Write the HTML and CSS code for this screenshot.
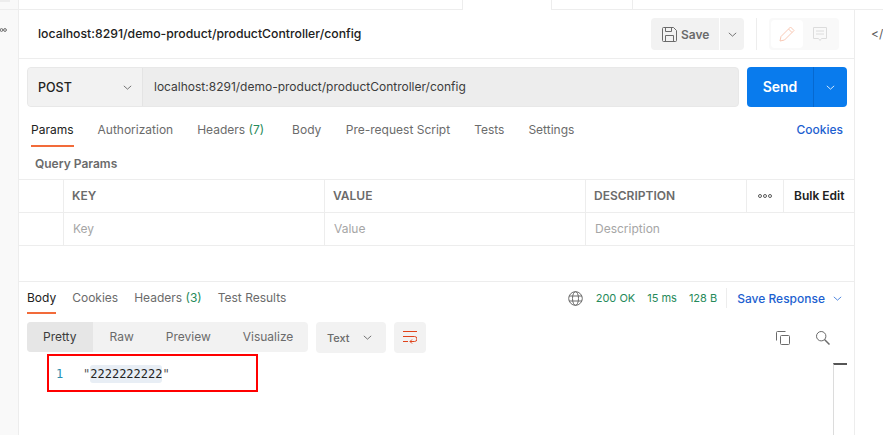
FILE: index.html
```html
<!DOCTYPE html>
<html lang="en">
<head>
<meta charset="utf-8">
<title>Postman request</title>
<link rel="stylesheet" href="styles.css">
</head>
<body>
<div class="app">
  <aside class="sidebar"><span class="side-top"></span><span class="side-rule"></span><svg class="side-dots" width="7" height="4" viewBox="0 0 7 4" fill="none" stroke="#6b6b6b"><circle cx="1.500" cy="2" r="1.400"/><circle cx="5" cy="2" r="1.400"/></svg></aside>
  <main class="main">
    <div class="tabstrip"><span class="tab-a"></span><span class="tab-b"></span></div>
    <header class="titlebar">
      <div class="title">localhost:8291/demo-product/productController/config</div>
      <div class="save-group">
        <button class="save"><svg width="15" height="15" viewBox="0 0 15 15" fill="none" stroke="#6b6b6b"><path d="M.5 1.500a1 1 0 0 1 1-1h10l3 3v10a1 1 0 0 1-1 1h-12a1 1 0 0 1-1-1z"/><path d="M3.500.5v4h6v-4M3.500 14.500v-6h8v6"/></svg>Save</button>
        <button class="save-more"><svg class="chev" width="9" height="5" viewBox="0 0 11 6"><path d="M1 1l4.500 4L10 1"/></svg></button>
      </div>
      <span class="vsep"></span>
      <div class="mode">
        <span class="mode-on"><svg width="16" height="16" viewBox="0 0 16 16" fill="none" stroke="#f9c9b5"><path d="M1 15l1-4.500L11.500 1l3.500 3.500L5.500 14z"/><path d="M9.500 3l3.500 3.500"/></svg></span>
        <span class="mode-off"><svg width="14" height="14" viewBox="0 0 14 14" fill="none" stroke="#dcdcdc"><path d="M.5.5h13v11h-5l-1.500 2-1.500-2h-5z"/><path d="M3 4h8M3 7h8"/></svg></span>
      </div>
    </header>
    <section class="urlrow">
      <div class="urlbox">
        <div class="method"><span>POST</span><svg class="chev" width="9" height="5" viewBox="0 0 11 6"><path d="M1 1l4.500 4L10 1"/></svg></div>
        <div class="url">localhost:8291/demo-product/productController/config</div>
      </div>
      <div class="send"><span class="send-label">Send</span><span class="send-more"><svg class="chev white" width="9" height="5" viewBox="0 0 11 6"><path d="M1 1l4.500 4L10 1"/></svg></span></div>
    </section>
    <nav class="reqtabs">
      <span class="rt active">Params</span>
      <span class="rt">Authorization</span>
      <span class="rt">Headers <i class="count">(7)</i></span>
      <span class="rt body-tab">Body</span>
      <span class="rt">Pre-request Script</span>
      <span class="rt">Tests</span>
      <span class="rt">Settings</span>
      <span class="cookies">Cookies</span>
    </nav>
    <div class="qp">Query Params</div>
    <div class="row head">
      <span class="c0"></span><span class="c1">KEY</span><span class="c2">VALUE</span><span class="c3">DESCRIPTION</span><span class="c4"><svg width="14" height="4" viewBox="0 0 14 4" fill="none" stroke="#5a5a5a"><circle cx="2" cy="2" r="1.500"/><circle cx="7" cy="2" r="1.500"/><circle cx="12" cy="2" r="1.500"/></svg></span><span class="c5">Bulk Edit</span>
    </div>
    <div class="row ph">
      <span class="c0"></span><span class="c1">Key</span><span class="c2">Value</span><span class="c3">Description</span>
    </div>
    <div class="spacer"></div>
    <nav class="restabs">
      <div class="restab-list">
        <span class="rs active">Body</span>
        <span class="rs">Cookies</span>
        <span class="rs">Headers <i class="count">(3)</i></span>
        <span class="rs">Test Results</span>
      </div>
      <div class="status">
        <svg class="globe" width="15" height="15" viewBox="0 0 15 15" fill="none" stroke="#6b6b6b"><circle cx="7.500" cy="7.500" r="6.800"/><ellipse cx="7.500" cy="7.500" rx="3" ry="6.800"/><path d="M1 5h13M1 10h13"/></svg>
        <span class="ok">200 OK</span><span class="ok">15 ms</span><span class="ok">128 B</span>
        <span class="stat-sep"></span>
        <span class="save-resp">Save Response</span>
        <svg class="chev blue" width="9" height="5" viewBox="0 0 11 6"><path d="M1 1l4.500 4L10 1"/></svg>
      </div>
    </nav>
    <div class="toolbar">
      <div class="views">
        <span class="view on">Pretty</span><span class="view raw">Raw</span><span class="view">Preview</span><span class="view">Visualize</span>
      </div>
      <div class="fmt"><span>Text</span><svg class="chev" width="9" height="5" viewBox="0 0 11 6"><path d="M1 1l4.500 4L10 1"/></svg></div>
      <div class="wrap"><svg width="14" height="14" viewBox="0 0 14 14" fill="none" stroke="#e0431b"><path d="M0 .5h14M0 5.500h11.500a2.500 2.500 0 0 1 0 5H7M0 10.500h5"/><path d="M9 8.500l-2 2 2 2"/></svg></div>
      <div class="tools">
        <svg width="14" height="14" viewBox="0 0 14 14" fill="none" stroke="#6b6b6b"><rect x="4.500" y="4.500" width="9" height="9" rx="1"/><path d="M.5 9.500v-8a1 1 0 0 1 1-1h8"/></svg>
        <svg width="14" height="14" viewBox="0 0 14 14" fill="none" stroke="#6b6b6b"><circle cx="5.200" cy="5.200" r="4.700"/><path d="M8.500 8.500l5 5" stroke-width="1.500"/></svg>
      </div>
    </div>
    <div class="editor">
      <div class="highlight-box">
        <span class="ln">1</span><span class="code"><span class="q">"</span><span class="sel">2222222222</span><span class="q">"</span></span>
      </div>
      <div class="scroll"></div>
    </div>
  </main>
  <aside class="rightbar"><span class="code-icon">&lt;/</span></aside>
</div>
</body>
</html>
```
FILE: styles.css
```css
* { box-sizing: border-box; }
html, body { margin: 0; height: 100%; overflow: hidden; background: #fff; }
body { font-family: Inter, "Liberation Sans", sans-serif; font-size: 12px; color: #6b6b6b; }
button { font: inherit; border: 0; color: inherit; padding: 0; }
i { font-style: normal; }

.app { display: flex; width: 883px; height: 435px; }
.sidebar { width: 19px; background: #f9f9f9; border-right: 1px solid #ededed; position: relative; }
.side-top { position: absolute; left: 0; top: 0; width: 10px; height: 2px; background: #ededed; }
.side-rule { position: absolute; left: 0; top: 9px; width: 18px; height: 1px; background: #ededed; }
.side-dots { position: absolute; left: 0; top: 28px; }
.main { width: 835px; display: flex; flex-direction: column; }
.rightbar { width: 29px; margin-top: 9px; border-top: 1px solid #ededed; border-left: 1px solid #ededed; padding-top: 14px; padding-left: 16px; }
.code-icon { font-size: 12px; line-height: 20px; white-space: nowrap; color: #5a5a5a; }

.tabstrip { height: 10px; border-bottom: 1px solid #ededed; display: flex; align-items: flex-start; padding-left: 443px; }
.tab-a { width: 90px; height: 10px; border-left: 1px solid #ededed; border-right: 1px solid #ededed; background: #fff; }
.tab-b { width: 81px; height: 9px; border-right: 1px solid #ededed; }

.titlebar { height: 49px; border-bottom: 1px solid #ededed; display: flex; align-items: center; padding-left: 19px; }
.title { width: 613px; padding-bottom: 2px; font-size: 12.250px; font-weight: 500; color: #212121; white-space: nowrap; }
.save-group { display: flex; gap: 1px; height: 32px; }
.save { width: 68px; height: 32px; background: #f2f2f2; border-radius: 4px 0 0 4px; display: flex; align-items: center; gap: 4px; padding-left: 11px; font-weight: 600; font-size: 12px; }
.save-more { width: 24px; height: 32px; background: #f2f2f2; border-radius: 0 4px 4px 0; display: flex; align-items: center; justify-content: center; }
.vsep { width: 1px; height: 32px; background: #ededed; margin: 0 12px; }
.mode { width: 70px; height: 32px; background: #f9f9f9; border-radius: 4px; display: flex; padding: 2px; }
.mode-on { width: 32px; height: 28px; background: #fff; border-radius: 4px; display: flex; align-items: center; justify-content: center; }
.mode-off { width: 34px; display: flex; align-items: center; justify-content: center; }

.chev { fill: none; stroke: #5a5a5a; flex: none; }
.chev.white { stroke: #fff; }
.chev.blue { stroke: #2e6fd8; }

.urlrow { display: flex; padding: 8px 7px 0 8px; height: 48px; gap: 8px; }
.urlbox { width: 712px; height: 40px; display: flex; background: #ededed; border-radius: 4px; border: 1px solid #e8e8e8; overflow: hidden; }
.method { width: 115px; background: #f2f2f2; border-right: 1px solid #e4e4e4; display: flex; align-items: center; justify-content: space-between; padding: 0 10px; color: #212121; font-weight: 500; font-size: 12.500px; }
.url { padding-left: 11px; line-height: 38px; font-size: 12px; color: #3c3c3c; white-space: nowrap; }
.send { width: 100px; height: 40px; background: #097bed; border-radius: 4px; display: flex; color: #fff; }
.send-label { width: 67px; text-align: center; line-height: 40px; font-size: 14px; font-weight: 600; border-right: 1px solid #0669d0; }
.send-more { flex: 1; display: flex; align-items: center; justify-content: center; }

.reqtabs { height: 40px; display: flex; padding: 13px 11px 0 12px; gap: 24px; align-items: flex-start; }
.rt { line-height: 20px; font-size: 12px; color: #6b6b6b; white-space: nowrap; }
.rt.active { color: #212121; border-bottom: 2px solid #f26b3a; height: 27px; }
.body-tab { margin-left: 4px; margin-right: 0.500px; }
.count { color: #268a5a; }
.cookies { margin-left: auto; color: #1d5fd0; font-weight: 500; font-size: 12px; line-height: 20px; }

.qp { height: 33px; padding-left: 16px; padding-top: 1px; font-weight: 600; font-size: 12px; line-height: 32px; color: #6b6b6b; border-bottom: 1px solid #ededed; }
.row { display: flex; height: 33px; border-bottom: 1px solid #ededed; align-items: stretch; }
.row span { display: flex; align-items: center; border-right: 1px solid #ededed; padding-left: 8px; padding-bottom: 1px; white-space: nowrap; }
.row span.c0 { width: 45px; padding-left: 0; }
.c1, .c2 { width: 261px; }
.c3 { width: 161px; }
.row span.c4 { width: 37px; padding-left: 0; justify-content: center; }
.row span.c5 { flex: 1; border-right: 0; padding-left: 10px; color: #212121; font-weight: 600; }
.head { font-weight: 600; }
.ph { color: #a6a6a6; }
.ph .c1, .ph .c2, .ph .c3 { padding-left: 9px; }
.row.ph span.c3 { border-right: 0; }
.spacer { height: 36px; border-bottom: 1px solid #ededed; }

.restabs { height: 32px; display: flex; justify-content: space-between; padding: 0 12px 0 8px; }
.restab-list { display: flex; gap: 16px; }
.rs { height: 32px; line-height: 32px; font-size: 12px; white-space: nowrap; }
.rs.active { color: #212121; border-bottom: 2px solid #f26b3a; }
.status { display: flex; align-items: center; height: 32px; font-size: 11px; white-space: nowrap; }
.globe { margin-right: 13px; }
.ok { color: #268a5a; margin-right: 12px; }
.stat-sep { width: 1px; height: 20px; background: #ededed; margin-right: 10px; margin-left: -3px; }
.save-resp { color: #1d5fd0; font-size: 12px; font-weight: 500; margin-right: 8px; }

.toolbar { display: flex; padding: 8px 0 0 8px; height: 40px; }
.views { width: 281px; height: 30px; background: #f2f2f2; border-radius: 4px; display: flex; color: #6b6b6b; overflow: hidden; }
.view { padding: 0 16px; line-height: 30px; font-size: 12px; }
.view.raw { margin-left: 1px; }
.view.on { background: #e6e6e6; color: #3c3c3c; }
.fmt { margin-left: 8px; width: 70px; height: 31px; background: #f2f2f2; border-radius: 4px; display: flex; align-items: center; justify-content: space-between; padding: 0 14px 0 11px; font-weight: 500; font-size: 11px; }
.wrap { margin-left: 8px; width: 32px; height: 31px; background: #f2f2f2; border-radius: 4px; display: flex; align-items: center; justify-content: center; }
.tools { margin-left: auto; display: flex; gap: 26px; padding: 9px 24px 0 0; }

.editor { flex: 1; position: relative; }
.highlight-box { position: absolute; left: 28px; top: 0; width: 211px; height: 38px; padding-top: 2px; border: 2px solid #f00; display: flex; align-items: center; font-family: "DejaVu Sans Mono", "Liberation Mono", monospace; font-size: 12px; }
.ln { width: 35px; padding-left: 7px; color: #2b8eb0; }
.code { display: flex; color: #222; margin-left: -1px; }
.q { color: #555; padding-top: 2px; }
.sel { background: #e8eef5; border-radius: 3px; padding: 2px 0; }
.scroll { position: absolute; left: 814px; top: 9px; width: 14px; bottom: 0; border-left: 1px solid #dcdcdc; border-top: 2px solid #555; }
```
